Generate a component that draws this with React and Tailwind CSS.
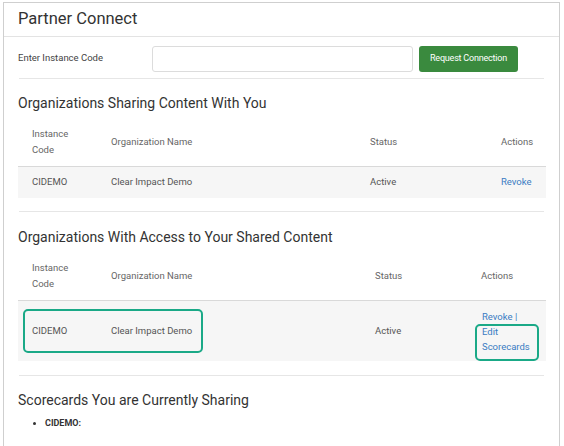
import React from 'react';

const font = { fontFamily: 'Roboto, "Noto Sans", sans-serif' };

const Hr = () => <div className="mx-[15px] h-px bg-[#e6e6e6]" />;

const HeaderCell = ({ children, className = '' }) => (
    <th className={`text-left align-middle font-normal text-[9.5px] leading-[16px] text-[#666] ${className}`}>{children}</th>
);

const App = () => {
    return (
        <div className="w-[564px] h-[446px] bg-white pt-[2px] pl-[3px]" style={font}>
            <div className="w-[557px] h-[450px] border border-[#cfcfcf] bg-white">
                {/* Title */}
                <div className="h-[34px] border-b border-[#e3e3e3] flex items-center px-[14px] pb-[1px]">
                    <h1 className="text-[16.5px] text-[#333] leading-none">Partner Connect</h1>
                </div>

                {/* Request form */}
                <div className="flex items-center h-[41px] px-[14px] pt-[2px]">
                    <label className="w-[134px] text-[9.5px] text-[#444]">Enter Instance Code</label>
                    <input className="w-[261px] h-[26px] border border-[#dcdcdc] rounded-[3px] bg-white" />
                    <button className="ml-[6px] w-[99px] h-[26px] rounded-[3px] bg-[#3a8a3e] text-white text-[9px] tracking-[-0.2px]">
                        Request Connection
                    </button>
                </div>
                <Hr />

                {/* Sharing with you */}
                <h2 className="px-[14px] mt-[14px] text-[14px] leading-[20px] text-[#333]">Organizations Sharing Content With You</h2>
                <div className="px-[14px] mt-[5px]">
                    <table className="w-[528px] border-collapse table-fixed">
                        <thead>
                            <tr className="h-[48px] border-b border-[#d9d9d9]">
                                <HeaderCell className="w-[93px] pl-[14px]">Instance<br />Code</HeaderCell>
                                <HeaderCell className="w-[259px]">Organization Name</HeaderCell>
                                <HeaderCell className="w-[131px]">Status</HeaderCell>
                                <HeaderCell>Actions</HeaderCell>
                            </tr>
                        </thead>
                        <tbody>
                            <tr className="h-[32px] bg-[#f6f6f6] text-[9.5px] text-[#555]">
                                <td className="pl-[14px]">CIDEMO</td>
                                <td>Clear Impact Demo</td>
                                <td>Active</td>
                                <td className="text-[#3a7cc3]">Revoke</td>
                            </tr>
                        </tbody>
                    </table>
                </div>
                <div className="mt-[13px]"><Hr /></div>

                {/* Access to your content */}
                <h2 className="px-[14px] mt-[15px] text-[14px] leading-[20px] text-[#333]">Organizations With Access to Your Shared Content</h2>
                <div className="px-[14px] mt-[5px]">
                    <table className="w-[528px] border-collapse table-fixed">
                        <thead>
                            <tr className="h-[48px] border-b border-[#d9d9d9]">
                                <HeaderCell className="w-[93px] pl-[14px]">Instance<br />Code</HeaderCell>
                                <HeaderCell className="w-[264px]">Organization Name</HeaderCell>
                                <HeaderCell className="w-[106px]">Status</HeaderCell>
                                <HeaderCell>Actions</HeaderCell>
                            </tr>
                        </thead>
                        <tbody>
                            <tr className="h-[61px] bg-[#f6f6f6] text-[9.5px] text-[#555]">
                                <td colSpan={2} className="pl-[5px]">
                                    <div className="w-[180px] h-[44px] border-2 border-[#1aa987] rounded-[5px] flex items-center">
                                        <span className="w-[86px] pl-[7px]">CIDEMO</span>
                                        <span>Clear Impact Demo</span>
                                    </div>
                                </td>
                                <td>Active</td>
                                <td className="align-top pt-[8px] text-[#3a7cc3] leading-[15px]">
                                    <div className="pl-[1px]">Revoke |</div>
                                    <div className="-ml-[6px] w-[64px] h-[37px] border-2 border-[#1aa987] rounded-[5px] pl-[5px]">
                                        <div className="-mt-[2px]">
                                            <div>Edit</div>
                                            <div>Scorecards</div>
                                        </div>
                                    </div>
                                </td>
                            </tr>
                        </tbody>
                    </table>
                </div>
                <div className="mt-[14px]"><Hr /></div>

                {/* Scorecards */}
                <h2 className="px-[14px] mt-[14px] text-[14px] leading-[20px] text-[#333]">Scorecards You are Currently Sharing</h2>
                <ul className="mt-[5px] pl-[41px] list-disc text-[9px] leading-[16px] font-bold text-[#333]">
                    <li>CIDEMO:</li>
                </ul>
            </div>
        </div>
    );
};

export default App;
